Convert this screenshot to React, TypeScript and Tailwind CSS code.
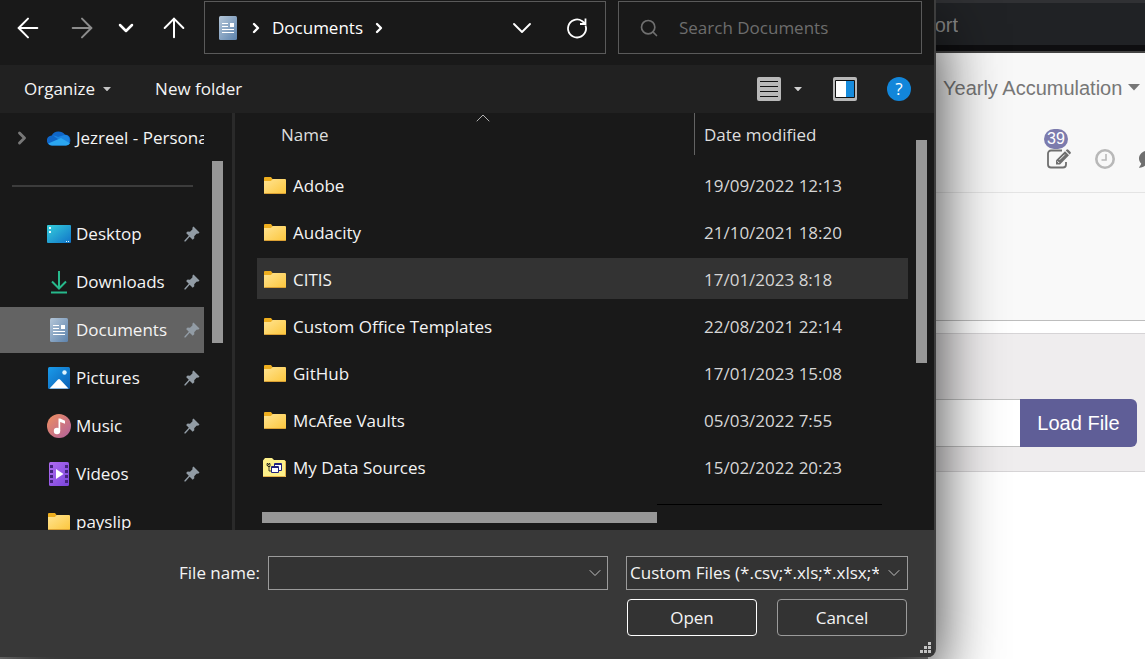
import React from "react";
import {
  ArrowLeft,
  ArrowRight,
  ArrowUp,
  ChevronDown,
  ChevronRight,
  ChevronUp,
  Search,
} from "lucide-react";
import { FaComment } from "react-icons/fa";

interface QuickLink {
  name: string;
  icon: () => React.ReactElement;
  pinned: boolean;
}

interface FolderRow {
  name: string;
  modified: string;
  source?: boolean;
}

function DocumentIcon() {
  return (
    <svg width="24" height="24" viewBox="0 0 24 24" aria-hidden="true">
      <defs>
        <linearGradient id="doc" x1="0" y1="0" x2="1" y2="1">
          <stop offset="0" stopColor="#b4c6d8" />
          <stop offset="1" stopColor="#5d83ad" />
        </linearGradient>
      </defs>
      <rect x="3" y="0" width="18" height="24" rx="1.5" fill="url(#doc)" />
      <path d="M6 7.5h6M6 10.5h6M6 13.5h12M6 16.5h12" stroke="#fff" strokeWidth="1.2" />
      <rect x="14" y="7" width="4" height="4" fill="#fff" />
    </svg>
  );
}

function CloudIcon() {
  return (
    <svg width="24" height="24" viewBox="0 0 24 24" aria-hidden="true">
      <path d="M5 19.5a5 5 0 0 1-.3-10A7.8 7.8 0 0 1 18 8.800 5.400 5.400 0 0 1 19 19.500z" fill="#0f66c8" />
      <path d="M6 9.500a7 7 0 0 1 5 1.500l7-2.200a5.400 5.400 0 0 1 1.500 10.200z" fill="#1b84e0" />
      <path d="M1.200 17.500 14 12l9 5.200a5 5 0 0 1-4 2.300H5a5 5 0 0 1-3.800-2z" fill="#2ba6f0" />
    </svg>
  );
}

function DesktopIcon() {
  return (
    <svg width="24" height="24" viewBox="0 0 24 24" aria-hidden="true">
      <defs>
        <linearGradient id="desk" x1="0" y1="0" x2="1" y2="1">
          <stop offset="0" stopColor="#35cfdc" />
          <stop offset="1" stopColor="#1173c8" />
        </linearGradient>
      </defs>
      <rect x="0" y="3" width="24" height="18" rx="1" fill="url(#desk)" />
      <path d="M2 5h2v2H2zM2 9h2v2H2zM19 19h1v1h-1zM21 19h1v1h-1z" fill="#e6fbff" />
    </svg>
  );
}

function DownloadIcon() {
  return (
    <svg width="24" height="24" viewBox="0 0 24 24" fill="none" stroke="#27b98c" strokeWidth="2" aria-hidden="true">
      <path d="M12 1v17M5 11.500l7 7 7-7M4 22.500h16" />
    </svg>
  );
}

function PictureIcon() {
  return (
    <svg width="24" height="24" viewBox="0 0 24 24" aria-hidden="true">
      <defs>
        <linearGradient id="pic" x1="0" y1="0" x2="1" y2="1">
          <stop offset="0" stopColor="#1a9bea" />
          <stop offset="1" stopColor="#0c60b5" />
        </linearGradient>
      </defs>
      <rect x="1" y="1" width="22" height="22" rx="1.500" fill="url(#pic)" />
      <path d="M2.500 22.500 11 13.500q1-1 2 0l8.500 9z" fill="#fff" />
      <circle cx="17.500" cy="6.500" r="2.200" fill="#dff4ff" />
    </svg>
  );
}

function MusicIcon() {
  return (
    <svg width="24" height="24" viewBox="0 0 24 24" aria-hidden="true">
      <defs>
        <linearGradient id="mus" x1="0" y1="0" x2="1" y2="1">
          <stop offset="0" stopColor="#f0905e" />
          <stop offset="1" stopColor="#b0609e" />
        </linearGradient>
      </defs>
      <circle cx="12" cy="12" r="12" fill="url(#mus)" />
      <circle cx="10" cy="17" r="3.200" fill="#fff" />
      <path d="M11.500 4.500h1.700l4.800 2.300v3l-4.800-1.800V17h-1.700z" fill="#fff" />
    </svg>
  );
}

function VideoIcon() {
  return (
    <svg width="24" height="24" viewBox="0 0 24 24" aria-hidden="true">
      <defs>
        <linearGradient id="vid" x1="0" y1="0" x2="1" y2="1">
          <stop offset="0" stopColor="#b06cf0" />
          <stop offset="1" stopColor="#7a45dc" />
        </linearGradient>
      </defs>
      <rect x="2" y="0" width="20" height="24" rx="1.500" fill="url(#vid)" />
      <path
        d="M3 3h3v3H3zM3 8h3v3H3zM3 13h3v3H3zM3 18h3v3H3zM18 3h3v3h-3zM18 8h3v3h-3zM18 13h3v3h-3zM18 18h3v3h-3z"
        fill="#44227e"
      />
      <path d="M9 7v10l7.500-5z" fill="#fff" />
    </svg>
  );
}

function FolderIcon() {
  return (
    <svg width="24" height="24" viewBox="0 0 24 24" aria-hidden="true">
      <defs>
        <linearGradient id="fold" x1="0" y1="0" x2="1" y2="1">
          <stop offset="0" stopColor="#ffe492" />
          <stop offset="1" stopColor="#fcc63c" />
        </linearGradient>
      </defs>
      <path d="M1 4a1 1 0 0 1 1-1h6l1.500 2v3H1z" fill="#eeae1e" />
      <path d="M1 7h7l1.500-2H22a1 1 0 0 1 1 1V19a1 1 0 0 1-1 1H2a1 1 0 0 1-1-1z" fill="url(#fold)" />
      <path d="M2 19.500h20" stroke="#dba033" />
    </svg>
  );
}

function DataSourceIcon() {
  return (
    <svg width="24" height="24" viewBox="0 0 24 24" aria-hidden="true">
      <path d="M0 4.500 2 2h7l2 2h10.500L23 5.500V21H0z" fill="#fdf08a" />
      <path d="M22.500 5v15.500H0" fill="none" stroke="#e3b04a" />
      <path d="M11.500 7.500h7v7h-7z" fill="#fff" stroke="#22227e" />
      <path d="M8.500 10.500h7v6h-7z" fill="#fff" stroke="#22227e" />
      <path d="M11 8.500h8M8 11.500h8" stroke="#22227e" />
      <path d="M4 7.500h1v1h1v-1h1v3H5v-1H4zM6 10v5h2" stroke="#111" strokeWidth="0.8" fill="none" />
    </svg>
  );
}

function PinIcon() {
  return (
    <svg width="16" height="16" viewBox="0 0 16 16" aria-hidden="true">
      <path
        d="M9.500.500 15.500 6.500 14.500 7.500 12.500 7.700 10.200 10.200 10.300 12.300 8.700 13.700 5.700 10.700 1.500 15.500.400 15.500.400 14.400 4.800 9.800 2.100 7.100 3.600 5.600 6 5.700 8.400 3.400 8.500 1.500z"
        fill="#929ca5"
      />
    </svg>
  );
}

function ComposeIcon() {
  return (
    <svg width="24" height="20" viewBox="0 0 24 20" fill="none" aria-hidden="true">
      <path d="M15 1.500H4A3 3 0 0 0 1 4.500v11a3 3 0 0 0 3 3h12a3 3 0 0 0 3-3V13" stroke="currentColor" strokeWidth="1.800" />
      <path d="M9 15.500v-4.200L18 2.300l4 4-9 9.200z" fill="currentColor" />
      <path d="m18.800 1.500.9-.9q.8-.6 1.600.1l2.300 2.300q.6.800 0 1.500l-.9.900z" fill="currentColor" />
      <path d="m10.500 12.300 1.700 1.700M12.500 10.800l5.300-5.300" stroke="#f8f8f8" />
    </svg>
  );
}

function ClockIcon() {
  return (
    <svg width="20" height="20" viewBox="0 0 20 20" fill="none" stroke="currentColor" aria-hidden="true">
      <circle cx="10" cy="10" r="8.700" strokeWidth="2.600" />
      <path d="M11 5v6H6.500" strokeWidth="1.600" />
    </svg>
  );
}

function Caret({ className }: { className: string }) {
  return (
    <svg viewBox="0 0 10 6" className={className} aria-hidden="true">
      <path d="M0 0h10L5 5.500z" fill="currentColor" />
    </svg>
  );
}

const quickLinks: QuickLink[] = [
  { name: "Desktop", icon: DesktopIcon, pinned: true },
  { name: "Downloads", icon: DownloadIcon, pinned: true },
  { name: "Documents", icon: DocumentIcon, pinned: true },
  { name: "Pictures", icon: PictureIcon, pinned: true },
  { name: "Music", icon: MusicIcon, pinned: true },
  { name: "Videos", icon: VideoIcon, pinned: true },
  { name: "payslip", icon: FolderIcon, pinned: false },
];

const folders: FolderRow[] = [
  { name: "Adobe", modified: "19/09/2022 12:13" },
  { name: "Audacity", modified: "21/10/2021 18:20" },
  { name: "CITIS", modified: "17/01/2023 8:18" },
  { name: "Custom Office Templates", modified: "22/08/2021 22:14" },
  { name: "GitHub", modified: "17/01/2023 15:08" },
  { name: "McAfee Vaults", modified: "05/03/2022 7:55" },
  { name: "My Data Sources", modified: "15/02/2022 20:23", source: true },
];

function NavigationBar() {
  return (
    <div className="flex h-[65px] shrink-0 pt-px pr-3">
      <div className="flex h-[53px] items-center text-white">
        <button aria-label="Back" className="flex w-14 justify-center">
          <ArrowLeft className="size-8" strokeWidth={1.5} />
        </button>
        <button aria-label="Forward" className="flex w-[52px] justify-center text-[#8c8c8c]">
          <ArrowRight className="size-8" strokeWidth={1.5} />
        </button>
        <button aria-label="Recent locations" className="flex w-9 justify-center">
          <ChevronDown className="size-6" strokeWidth={2.5} />
        </button>
        <button aria-label="Up" className="flex w-[60px] justify-center">
          <ArrowUp className="size-8" strokeWidth={1.5} />
        </button>
      </div>
      <div className="flex h-[53px] flex-1 items-center border border-[#5a5a5a] pr-4 pl-[11px] text-white">
        <DocumentIcon />
        <ChevronRight className="ml-2 size-4" strokeWidth={3.5} />
        <button className="ml-2">Documents</button>
        <ChevronRight className="ml-2 size-4" strokeWidth={3.5} />
        <button aria-label="Previous locations" className="ml-auto">
          <ChevronDown className="size-8" strokeWidth={1.4} />
        </button>
        <button aria-label="Refresh" className="ml-[27px]">
          <svg width="24" height="24" viewBox="0 0 24 24" fill="none" stroke="#fff" strokeWidth="1.8">
            <path d="M20.500 9.500A9 9 0 1 1 17 5l3 2.500M20.500 2.500v5.500H15" />
          </svg>
        </button>
      </div>
      <div className="ml-3 flex h-[53px] w-[304px] items-center border border-[#5a5a5a] pl-5">
        <Search className="size-5 text-[#707070]" strokeWidth={2} />
        <input
          aria-label="Search Documents"
          placeholder="Search Documents"
          className="ml-5 min-w-0 flex-1 bg-transparent outline-none placeholder:text-[#6d6d6d]"
        />
      </div>
    </div>
  );
}

function Toolbar() {
  return (
    <div className="flex h-12 shrink-0 items-center bg-[#212121] pr-[23px] pl-6">
      <button className="flex items-center">
        Organize
        <Caret className="ml-2 w-2 text-[#c4c4c4]" />
      </button>
      <button className="ml-11">New folder</button>
      <button aria-label="Change your view" className="ml-auto">
        <svg width="24" height="24" viewBox="0 0 24 24">
          <rect width="24" height="24" rx="2" fill="#b8b8b8" />
          <path d="M3 4.500h18M3 9.500h18M3 14.500h18M3 19.500h18" stroke="#111" />
        </svg>
      </button>
      <button aria-label="More options" className="ml-[13px]">
        <Caret className="w-2 text-[#d0d0d0]" />
      </button>
      <button aria-label="Show the preview pane" className="ml-[31px]">
        <svg width="24" height="24" viewBox="0 0 24 24">
          <rect width="24" height="24" rx="2" fill="#b8b8b8" />
          <rect x="2" y="3" width="20" height="18" rx="1" fill="#111" />
          <rect x="3" y="4" width="10" height="16" fill="#fff" />
          <rect x="13" y="4" width="8" height="16" fill="#168bdc" />
        </svg>
      </button>
      <button
        aria-label="Get help"
        className="ml-[30px] flex size-6 items-center justify-center rounded-full bg-[#1286da] text-white"
      >
        ?
      </button>
    </div>
  );
}

function Sidebar() {
  return (
    <nav className="flex shrink-0 border-r-3 border-[#2a2a2a]">
      <div className="w-[204px] overflow-hidden pt-[2px]">
        <button className="flex h-[46px] w-full items-center overflow-hidden pl-3 whitespace-nowrap">
          <ChevronRight className="size-5 shrink-0 text-[#787878]" strokeWidth={3.5} />
          <span className="ml-[15px] shrink-0">
            <CloudIcon />
          </span>
          <span className="ml-[5px]">Jezreel - Personal</span>
        </button>
        <hr className="my-6 mr-[11px] ml-3 border-t-2 border-[#3c3c3c]" />
        <ul className="flex flex-col gap-[2px]">
          {quickLinks.map((link) => {
            const Icon = link.icon;
            const isSelected = link.name === "Documents";

            return (
              <li key={link.name}>
                <a
                  href="#"
                  className={`flex h-[46px] items-center pr-1 pl-[47px] ${isSelected ? "bg-[#636363]" : ""}`}
                >
                  <Icon />
                  <span className="ml-[5px] flex-1">{link.name}</span>
                  {link.pinned && <PinIcon />}
                </a>
              </li>
            );
          })}
        </ul>
      </div>
      <div className="w-7 pt-12 pl-2">
        <div className="h-[182px] w-[11px] bg-[#979797]"></div>
      </div>
    </nav>
  );
}

function FileList() {
  return (
    <div className="flex min-w-0 flex-1 pl-[22px]">
      <div className="flex min-w-0 flex-1 flex-col">
        <div className="min-h-0 flex-1 overflow-hidden">
          <table className="w-full table-fixed">
            <thead>
              <tr className="h-12 text-left align-top text-[#dedede]">
                <th className="p-0 font-normal">
                  <div className="relative flex h-[42px] items-center pt-[2px] pl-6">
                    Name
                    <ChevronUp className="absolute -top-[7px] left-[214px] size-6 text-[#b0b0b0]" strokeWidth={1} />
                  </div>
                </th>
                <th className="w-[214px] p-0 font-normal">
                  <div className="flex h-[42px] items-center border-l border-[#636363] pt-[2px] pl-[9px]">
                    Date modified
                  </div>
                </th>
              </tr>
            </thead>
            <tbody>
              {folders.map((folder) => {
                const isHovered = folder.name === "CITIS";

                return (
                  <tr key={folder.name} className="h-[47px]">
                    <td className="p-0">
                      <div
                        className={`flex h-[41px] items-center pt-[2px] pl-[6px] ${isHovered ? "bg-[#333333]" : ""}`}
                      >
                        {folder.source ? <DataSourceIcon /> : <FolderIcon />}
                        <span className="ml-[6px]">{folder.name}</span>
                      </div>
                    </td>
                    <td className="p-0">
                      <div
                        className={`flex h-[41px] items-center pt-[2px] pl-[10px] text-[#d6d6d6] ${isHovered ? "bg-[#333333]" : ""}`}
                      >
                        {folder.modified}
                      </div>
                    </td>
                  </tr>
                );
              })}
            </tbody>
          </table>
        </div>
        <div className="flex h-[26px] pr-[26px] pl-[5px]">
          <div className="mt-2 h-[11px] w-[395px] bg-[#979797]"></div>
          <div className="flex-1 border-t border-black"></div>
        </div>
      </div>
      <div className="w-[26px] pt-[27px] pl-2">
        <div className="h-[223px] w-[11px] bg-[#979797]"></div>
      </div>
    </div>
  );
}

function DialogFooter() {
  return (
    <div className="flex h-[127px] shrink-0 flex-col bg-[#383838] pt-[26px]">
      <div className="flex items-center pr-[26px]">
        <label htmlFor="file-name" className="w-[260px] text-right">
          File name:
        </label>
        <div className="ml-2 flex h-[34px] flex-1 items-center border border-[#9b9b9b] bg-[#333333] pr-[2px]">
          <input id="file-name" className="min-w-0 flex-1 bg-transparent px-1 outline-none" />
          <ChevronDown className="size-5 text-[#c0c0c0]" strokeWidth={1.2} />
        </div>
        <div className="relative ml-[18px] w-[282px]">
          <select
            aria-label="File type"
            className="h-[34px] w-full appearance-none overflow-hidden border border-[#9b9b9b] bg-[#333333] pr-7 pl-[3px] outline-none"
          >
            <option>Custom Files (*.csv;*.xls;*.xlsx;*.xml)</option>
          </select>
          <ChevronDown
            className="pointer-events-none absolute top-[7px] right-1 size-5 text-[#c0c0c0]"
            strokeWidth={1.2}
          />
        </div>
      </div>
      <div className="mt-[9px] flex justify-end gap-5 pr-[27px]">
        <button className="h-[37px] w-[130px] rounded border border-white bg-[#333333]">Open</button>
        <button className="h-[37px] w-[130px] rounded border border-[#9b9b9b] bg-[#333333]">Cancel</button>
      </div>
      <svg width="12" height="12" viewBox="0 0 12 12" className="mt-[6px] mr-[2px] self-end" aria-hidden="true">
        <path d="M8 0h3v3H8zM4 4h3v3H4zM8 4h3v3H8zM0 8h3v3H0zM4 8h3v3H4zM8 8h3v3H8z" fill="#c4c4c4" />
      </svg>
    </div>
  );
}

function OpenDialog() {
  return (
    <section
      role="dialog"
      aria-label="Open"
      className="z-10 mb-[2px] flex min-w-0 flex-1 flex-col overflow-hidden rounded-br-lg border-r-2 border-[#3d3d3d] bg-[#191919] text-[17px] leading-6 text-[#f4f4f4] shadow-[0_24px_64px_rgba(0,0,0,0.8)]"
    >
      <NavigationBar />
      <Toolbar />
      <div className="flex min-h-0 flex-1">
        <Sidebar />
        <FileList />
      </div>
      <DialogFooter />
    </section>
  );
}

function ReportPage() {
  return (
    <main className="-ml-2 flex w-[217px] shrink-0 flex-col bg-white font-['Liberation_Sans',Arial,sans-serif] text-[20px] leading-6">
      <div className="border-t-3 border-b-2 border-t-[#303134] border-b-[#444444] bg-[#202225] text-[#8b8b8b]">
        <div className="flex h-12 items-center border-b-6 border-[#0e0e10] pt-[2px]">
          <span className="flex w-[30px] justify-end overflow-hidden">ort</span>
        </div>
      </div>
      <div className="h-[139px] bg-[#f8f8f8] pl-2">
        <button className="flex h-[70px] items-center pl-[7px] whitespace-nowrap text-[#777777]">
          Yearly Accumulation
          <Caret className="ml-[6px] w-3" />
        </button>
        <div className="flex h-12 items-end overflow-hidden pb-[2px] pl-[108px] text-[#6f6f6f]">
          <button aria-label="Edit" className="flex flex-col items-start">
            <span className="w-6 rounded-full bg-[#7c7bad] text-center text-base leading-5 text-white">39</span>
            <span className="pl-[3px]">
              <ComposeIcon />
            </span>
          </button>
          <button aria-label="History" className="ml-6 text-[#b8b8b8]">
            <ClockIcon />
          </button>
          <button aria-label="Messages" className="ml-6">
            <FaComment className="size-5" />
          </button>
        </div>
      </div>
      <div className="h-[129px] border-t border-b border-t-[#e4e4e4] border-b-[#bdbdbd] bg-[#f9f9f9]"></div>
      <div className="mt-3 flex h-[139px] border-y border-[#d6d4d6] bg-[#efedee] pt-[65px] pr-2">
        <input
          aria-label="Selected file"
          readOnly
          className="h-12 min-w-0 flex-1 border-y border-[#c0c0c0] bg-white outline-none"
        />
        <button className="h-12 w-[117px] rounded-r-md bg-[#5f5e97] text-white">Load File</button>
      </div>
    </main>
  );
}

export default function App() {
  return (
    <div className="flex h-screen overflow-hidden bg-[#8e8e8e] font-['Open_Sans','Noto_Sans',sans-serif]">
      <OpenDialog />
      <ReportPage />
    </div>
  );
}
